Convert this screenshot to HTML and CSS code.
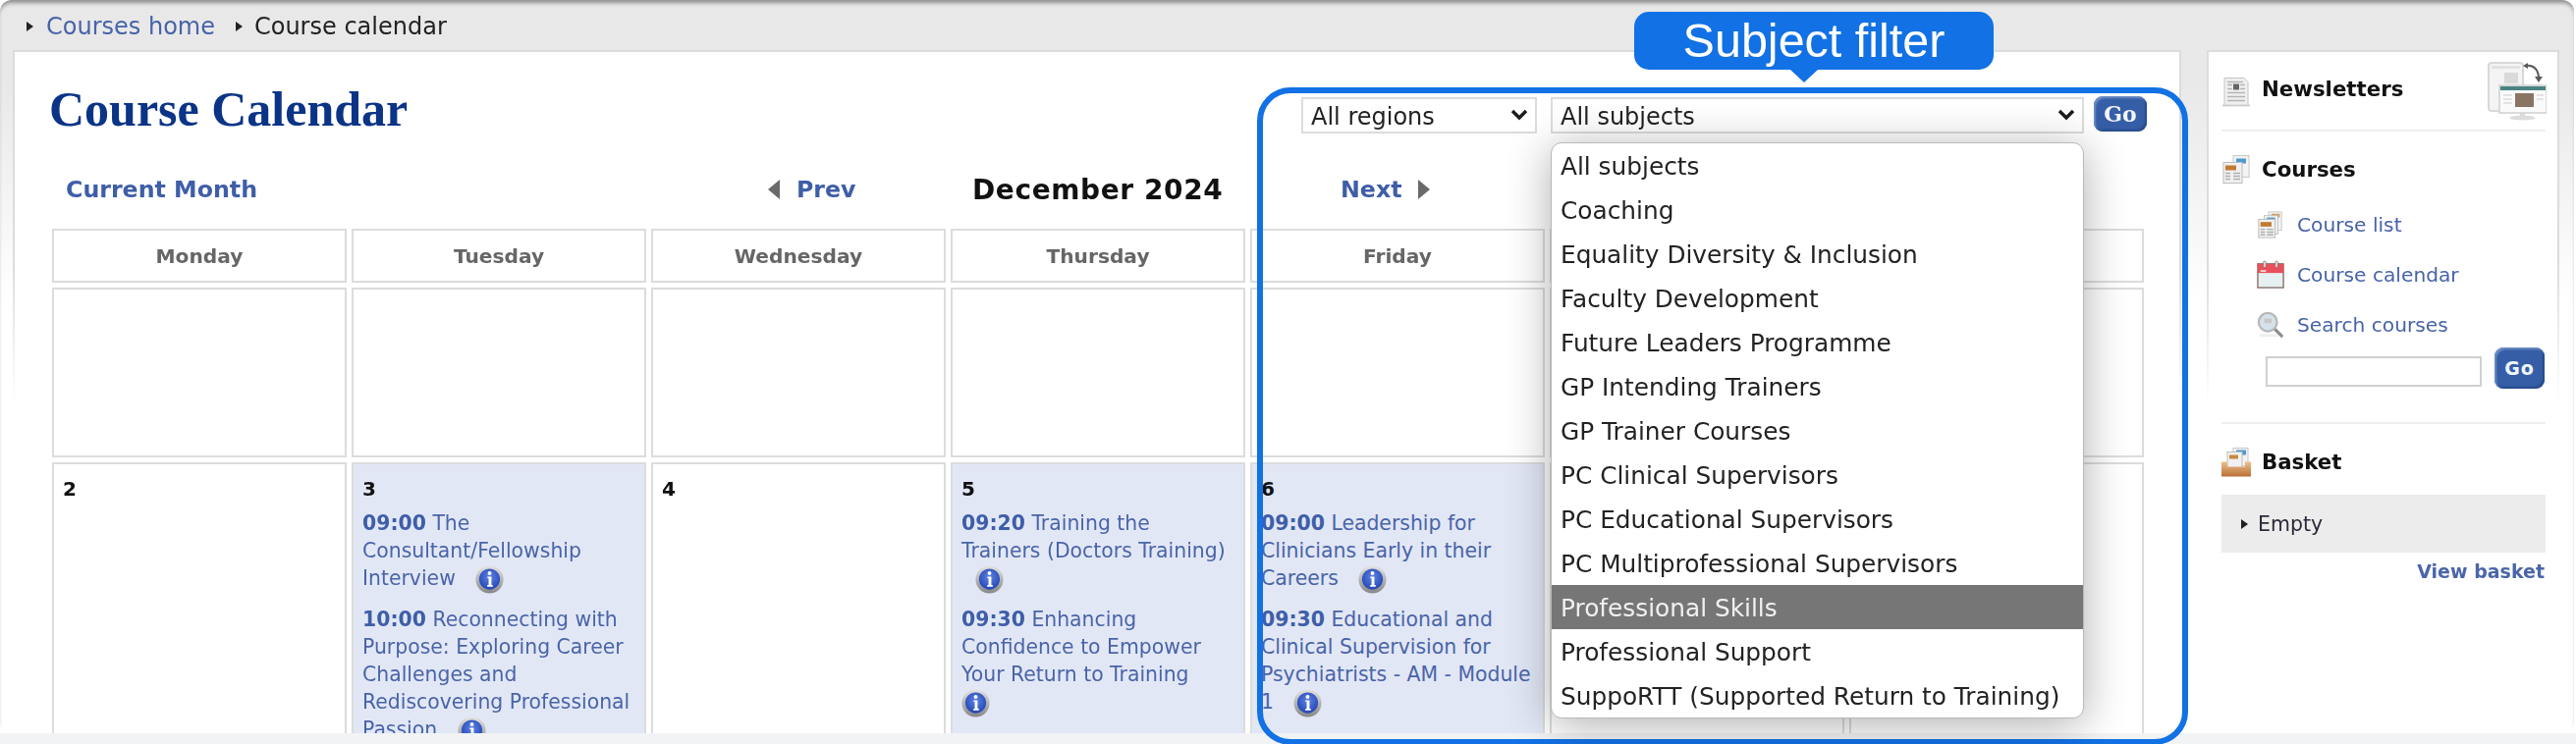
FILE: index.html
```html
<!DOCTYPE html>
<html lang="en">
<head>
<meta charset="utf-8">
<title>Course Calendar</title>
<link rel="stylesheet" href="styles.css">
</head>
<body>
<svg class="defs" width="0" height="0" aria-hidden="true">
  <defs>
    <radialGradient id="infoBlue" cx="50%" cy="40%" r="60%"><stop offset="0" stop-color="#5f84e6"/><stop offset="1" stop-color="#2447b4"/></radialGradient>
    <linearGradient id="ringGray" x1="0" y1="0" x2="0" y2="1"><stop offset="0" stop-color="#e2e2e2"/><stop offset="1" stop-color="#878787"/></linearGradient>
    <linearGradient id="trayOrange" x1="0" y1="0" x2="0" y2="1"><stop offset="0" stop-color="#eec08c"/><stop offset="1" stop-color="#b96f35"/></linearGradient>
    <symbol id="info" viewBox="0 0 30 30">
      <circle cx="15" cy="15" r="14.500" fill="url(#ringGray)"/>
      <circle cx="15" cy="14.500" r="11" fill="url(#infoBlue)"/>
      <circle cx="15" cy="8.300" r="2" fill="#fff"/>
      <path d="M12.800 11.800h4.200v9h1.400v1.600h-5.800v-1.600h1.400v-7.300h-1.200z" fill="#fff"/>
    </symbol>
    <symbol id="newspaper" viewBox="0 0 30 30">
      <path d="M3 1h20l4 4v24H3z" fill="#f0f0f0" stroke="#c4c4c4"/>
      <path d="M6 5h16M6 8h5M6 12h5M6 16h18M6 20h18M6 24h18M19 8h5M19 12h5" stroke="#b4b4b4" stroke-width="1.600"/>
      <rect x="12" y="7" width="6" height="6" fill="#666"/>
      <rect x="1" y="28" width="28" height="2" fill="#cfcfcf"/>
    </symbol>
    <symbol id="pages" viewBox="0 0 30 30">
      <rect x="12" y="1" width="16" height="22" fill="#f3f3f3" stroke="#c8c8c8"/>
      <rect x="15" y="4" width="10" height="5" fill="#4c9ad0"/>
      <rect x="2" y="8" width="19" height="21" fill="#f1f1f1" stroke="#bcbcbc"/>
      <rect x="4" y="11" width="11" height="5" fill="#c07a32"/>
      <path d="M4 19h5M4 22h5M4 25h5M12 19h7M12 22h7M12 25h7" stroke="#b0b0b0" stroke-width="1.500"/>
    </symbol>
    <symbol id="stack" viewBox="0 0 30 30">
      <rect x="13" y="1" width="14" height="20" fill="#f3f3f3" stroke="#c8c8c8"/>
      <rect x="16" y="3" width="9" height="4" fill="#d49a55"/>
      <rect x="8" y="5" width="15" height="20" fill="#f3f3f3" stroke="#c0c0c0"/>
      <rect x="11" y="7" width="9" height="4" fill="#5b9ccd"/>
      <rect x="2" y="9" width="18" height="20" fill="#f1f1f1" stroke="#b8b8b8"/>
      <rect x="4" y="12" width="12" height="5" fill="#c07a32"/>
      <path d="M4 20h5M4 23h5M4 26h5M11 20h7M11 23h7M11 26h7" stroke="#aeaeae" stroke-width="1.500"/>
    </symbol>
    <symbol id="calendar" viewBox="0 0 30 30">
      <rect x="1" y="3" width="28" height="26" fill="#e6f0f0" stroke="#86706c" stroke-width="1.500"/>
      <rect x="1" y="3" width="28" height="10" fill="#e8505c"/>
      <rect x="7" y="0" width="3" height="7" rx="1.500" fill="#d9d9d9" stroke="#8a5a5a" stroke-width=".6"/>
      <rect x="20" y="0" width="3" height="7" rx="1.500" fill="#d9d9d9" stroke="#8a5a5a" stroke-width=".6"/>
      <rect x="4" y="10" width="6" height="1.500" fill="#fff"/>
    </symbol>
    <symbol id="search" viewBox="0 0 30 30">
      <rect x="3" y="25" width="20" height="3" fill="#eee"/>
      <path d="M18 18l9 9" stroke="#8c8c8c" stroke-width="3.400" stroke-linecap="round"/>
      <circle cx="12" cy="12" r="10" fill="#d5e2ea" stroke="#b8b8b8" stroke-width="2.400"/>
      <rect x="8" y="8" width="8" height="5" fill="#c8c8c8"/>
    </symbol>
    <symbol id="tray" viewBox="0 0 30 30">
      <rect x="12" y="1" width="15" height="18" fill="#f3f3f3" stroke="#c8c8c8"/>
      <rect x="15" y="3" width="10" height="5" fill="#4c9ad0"/>
      <rect x="6" y="5" width="15" height="16" fill="#f1f1f1" stroke="#bdbdbd"/>
      <rect x="8" y="8" width="9" height="4" fill="#c9883f"/>
      <path d="M0 15h6v5h18v-5h6v15H0z" fill="url(#trayOrange)"/>
    </symbol>
  </defs>
</svg>

<div class="page">
  <div class="window">
    <nav class="crumbs">
      <i class="bullet"></i><a class="crumb-link" href="#">Courses home</a>
      <i class="bullet bullet-next"></i><span>Course calendar</span>
    </nav>

    <div class="columns">
      <main class="main">
        <div class="head">
          <h1>Course Calendar</h1>
          <form class="filters">
            <div class="select-wrap regions">
              <select><option>All regions</option></select>
              <svg class="chevron" viewBox="0 0 18 12"><path d="M2 2l7 7 7-7" fill="none" stroke="#1c1c1c" stroke-width="3.400"/></svg>
            </div>
            <div class="select-wrap subjects">
              <select><option>All subjects</option></select>
              <svg class="chevron" viewBox="0 0 18 12"><path d="M2 2l7 7 7-7" fill="none" stroke="#1c1c1c" stroke-width="3.400"/></svg>
            </div>
            <button class="go go-main" type="button">Go</button>
          </form>
        </div>

        <div class="month-nav">
          <a class="nav-link" href="#">Current Month</a>
          <a class="nav-link prev" href="#"><i class="tri tri-left"></i>Prev</a>
          <strong class="month">December 2024</strong>
          <a class="nav-link next" href="#">Next<i class="tri tri-right"></i></a>
        </div>

        <div class="calendar">
          <div class="dow">Monday</div><div class="dow">Tuesday</div><div class="dow">Wednesday</div><div class="dow">Thursday</div><div class="dow">Friday</div><div class="dow">Saturday</div><div class="dow">Sunday</div>
          <div class="day"></div><div class="day"></div><div class="day"></div><div class="day"></div><div class="day"></div><div class="day"></div><div class="day"></div>

          <div class="day"><b class="num">2</b></div>
          <div class="day has-events"><b class="num">3</b>
            <p class="event"><b>09:00</b> The Consultant/Fellowship Interview <svg class="info"><use href="#info"/></svg></p>
            <p class="event"><b>10:00</b> Reconnecting with Purpose: Exploring Career Challenges and Rediscovering Professional Passion <svg class="info"><use href="#info"/></svg></p>
          </div>
          <div class="day"><b class="num">4</b></div>
          <div class="day has-events"><b class="num">5</b>
            <p class="event"><b>09:20</b> Training the Trainers (Doctors Training) <svg class="info"><use href="#info"/></svg></p>
            <p class="event"><b>09:30</b> Enhancing Confidence to Empower Your Return to Training<br><svg class="info flush"><use href="#info"/></svg></p>
          </div>
          <div class="day has-events"><b class="num">6</b>
            <p class="event"><b>09:00</b> Leadership for Clinicians Early in their Careers <svg class="info"><use href="#info"/></svg></p>
            <p class="event"><b>09:30</b> Educational and Clinical Supervision for Psychiatrists - AM - Module 1 <svg class="info"><use href="#info"/></svg></p>
          </div>
          <div class="day"></div>
          <div class="day"></div>
        </div>
      </main>

      <aside class="side">
        <section class="side-section news">
          <svg class="side-icon"><use href="#newspaper"/></svg>
          <h2>Newsletters</h2>
          <svg class="devices" viewBox="0 0 60 60">
            <rect x="1" y="1" width="35" height="49" rx="3" fill="#f4f4f4" stroke="#d8d8d8" stroke-width="2"/>
            <rect x="4" y="4" width="29" height="3" fill="#e2e2e2"/>
            <rect x="17" y="11" width="14" height="11" fill="#dadada"/>
            <path d="M39 4c8-1 13 4 13 13" fill="none" stroke="#5a5a5a" stroke-width="2"/>
            <path d="M36 4l5-3v6zM48 15h8l-4 6z" fill="#5a5a5a"/>
            <rect x="12" y="24" width="48" height="28" fill="#fafafa" stroke="#d2d2d2" stroke-width="1.600"/>
            <rect x="13" y="25" width="46" height="4" fill="#4a8482"/>
            <rect x="28" y="32" width="19" height="14" fill="#8a7463"/>
            <path d="M16 34h9M16 38h9M16 42h9M50 34h7M50 38h7" stroke="#dcdcdc" stroke-width="1.600"/>
            <path d="M33 52h5v4h-5z" fill="#d8d8d8"/>
            <ellipse cx="35.500" cy="57" rx="13" ry="2.500" fill="#dcdcdc"/>
          </svg>
        </section>

        <section class="side-section courses">
          <div class="side-head"><svg class="side-icon"><use href="#pages"/></svg><h2>Courses</h2></div>
          <ul class="side-links">
            <li><svg class="link-icon"><use href="#stack"/></svg><a href="#">Course list</a></li>
            <li><svg class="link-icon"><use href="#calendar"/></svg><a href="#">Course calendar</a></li>
            <li><svg class="link-icon"><use href="#search"/></svg><a href="#">Search courses</a></li>
          </ul>
          <form class="search">
            <input type="text" aria-label="Search courses">
            <button class="go go-side" type="button">Go</button>
          </form>
        </section>

        <section class="basket">
          <div class="side-head"><svg class="side-icon"><use href="#tray"/></svg><h2>Basket</h2></div>
          <div class="basket-box"><i class="bullet"></i><span>Empty</span></div>
          <a class="view-basket" href="#">View basket</a>
        </section>
      </aside>
    </div>
  </div>

  <div class="frame"></div>
  <div class="callout">Subject filter</div>

  <ul class="dropdown">
    <li>All subjects</li>
    <li>Coaching</li>
    <li>Equality Diversity &amp; Inclusion</li>
    <li>Faculty Development</li>
    <li>Future Leaders Programme</li>
    <li>GP Intending Trainers</li>
    <li>GP Trainer Courses</li>
    <li>PC Clinical Supervisors</li>
    <li>PC Educational Supervisors</li>
    <li>PC Multiprofessional Supervisors</li>
    <li class="active">Professional Skills</li>
    <li>Professional Support</li>
    <li>SuppoRTT (Supported Return to Training)</li>
  </ul>
</div>
</body>
</html>
```

FILE: styles.css
```css
* { box-sizing: border-box; }
html, body { margin: 0; height: 758px; overflow: hidden; }
body { background: #f1f3f5; font-family: "DejaVu Sans", Verdana, sans-serif; color: #222; }
a { color: #4763a8; text-decoration: none; }
.defs { position: absolute; }

.page { position: relative; width: 2623px; height: 758px; overflow: hidden; background: linear-gradient(#ffffff 747px, #f1f3f5 747px); }
.window {
  width: 2621px;
  height: 747px;
  overflow: hidden;
  border-radius: 12px 12px 10px 10px;
  background: linear-gradient(#e8e8e8 0, #e9e9e9 90px, #ffffff 310px);
  box-shadow: inset 0 5px 4px -2px #8e8e8e;
  filter: blur(.45px);
}

.crumbs { display: flex; align-items: center; height: 51px; padding: 3px 0 0 27px; font-size: 24px; }
.bullet { display: inline-block; width: 0; height: 0; border-left: 7px solid #222; border-top: 5px solid transparent; border-bottom: 5px solid transparent; }
.crumb-link { margin-left: 13px; }
.bullet-next { margin-left: 21px; margin-right: 12px; }

.columns { display: flex; align-items: stretch; height: 696px; padding-left: 13px; }
.main, .side {
  border: 2px solid;
  border-bottom: 0;
  border-image: linear-gradient(#dcdcdc, #dcdcdc 220px, #ffffff 360px) 2;
  background: #fff;
}
.main { width: 2208px; }
.side { width: 359px; margin-left: 26px; padding: 0 12px 0 13px; }

.head { display: flex; justify-content: space-between; align-items: flex-start; height: 120px; padding: 30px 33px 0 35px; }
h1 { margin: 0; font: 700 50px/56px "Liberation Serif", "Times New Roman", serif; color: #0b3487; }
.filters { display: flex; margin-top: 16px; }
.select-wrap { position: relative; height: 37px; }
.regions { width: 240px; }
.subjects { width: 543px; margin-left: 14px; }
select {
  appearance: none;
  width: 100%;
  height: 100%;
  padding: 3px 8px 0;
  border: 2px solid #dcdcdc;
  border-radius: 0;
  background: #fff;
  color: #222;
  font: 400 24px "DejaVu Sans", Verdana, sans-serif;
}
.chevron { position: absolute; right: 9px; top: 12px; width: 18px; height: 12px; }
.go {
  border: 0;
  border-radius: 9px;
  background: #355ea6;
  box-shadow: inset 2px 2px 2px #6f8fc6, inset -2px -2px 2px #284b8c;
  color: #f2f5fb;
  font-weight: 700;
  font-family: "DejaVu Sans", Verdana, sans-serif;
}
.go-main { width: 54px; height: 36px; margin: -1px 0 0 10px; font: 700 22px "DejaVu Serif", serif; }
.go-side { width: 51px; height: 42px; margin-left: 13px; font-size: 19px; letter-spacing: 1px; }

.month-nav { display: grid; grid-template-columns: 716px 207px 375px auto; align-items: center; height: 40px; margin-bottom: 20px; padding-left: 52px; font-size: 23.700px; }
.nav-link { font-weight: 700; color: #3f5ea8; }
.month { font-size: 28px; color: #111; letter-spacing: .6px; }
.prev, .next { display: flex; align-items: center; }
.tri { width: 0; height: 0; border-top: 10px solid transparent; border-bottom: 10px solid transparent; }
.tri-left { border-right: 12px solid #6a6a6a; margin-right: 17px; margin-left: -1px; }
.tri-right { border-left: 12px solid #6a6a6a; margin-left: 16px; }

.calendar { display: grid; grid-template-columns: repeat(7, 300px); grid-template-rows: 55px 173px 400px; gap: 5px; margin-left: 38px; }
.dow, .day { border: 2px solid #dcdcdc; }
.dow { display: flex; align-items: center; justify-content: center; color: #666; font-size: 20.200px; font-weight: 700; }
.day { padding: 13px 9px 0; }
.has-events { background: #e1e7f5; }
.num { display: block; height: 24px; font-size: 20px; line-height: 24px; color: #111; }
.event { margin: 9px 0 14px; color: #4a64a8; font-size: 20.400px; line-height: 28px; }
.event b { color: #3f5ea8; }
.info { width: 29px; height: 29px; margin: -4px 0 -4px 14px; vertical-align: middle; }
.info.flush { margin-left: 0; }

.side-section { border-bottom: 2px solid #eeeeee; }
h2 { margin: 0; font-size: 21.300px; line-height: 30px; color: #111; }
.news { display: flex; align-items: center; height: 81px; padding: 10px 0 9px; }
.news h2 { margin: -4px 0 0 11px; }
.side-icon { flex: none; width: 30px; height: 31px; }
.devices { width: 60px; height: 60px; margin-left: auto; margin-right: -1px; }
.side-head { display: flex; align-items: center; gap: 11px; }
.courses { height: 298px; padding-top: 23px; }
.side-links { list-style: none; display: flex; flex-direction: column; gap: 21px; margin: 26px 0 0; padding: 0 0 0 36px; }
.side-links li { display: flex; align-items: center; gap: 13px; height: 30px; font-size: 20.200px; }
.link-icon { width: 28px; height: 30px; }
.search { display: flex; align-items: flex-end; margin-top: 8px; padding-left: 45px; }
.search input { width: 220px; height: 31px; margin-bottom: 2px; border: 2px solid #d0d0d0; background: #fff; }
.basket { padding-top: 23px; }
.basket-box { display: flex; align-items: center; height: 59px; margin-top: 18px; padding-left: 20px; background: #ececec; font-size: 20.500px; color: #2b2b3a; }
.basket-box .bullet { margin-right: 10px; }
.view-basket { display: block; margin: 8px 1px 0 0; text-align: right; font-size: 19px; font-weight: 700; line-height: 22px; color: #4a66aa; }

.frame { position: absolute; left: 1280px; top: 89px; width: 948px; height: 670px; border: 6px solid #1271e4; border-radius: 34px; }
.callout {
  position: absolute;
  left: 1664px;
  top: 12px;
  width: 366px;
  height: 59px;
  border-radius: 15px;
  background: #1271e4;
  color: #fff;
  font: 400 48.500px/58px "Liberation Sans", Arial, sans-serif;
  text-align: center;
}
.callout::after {
  content: "";
  position: absolute;
  left: 159px;
  top: 59px;
  border-top: 13px solid #1271e4;
  border-left: 14px solid transparent;
  border-right: 14px solid transparent;
}
.dropdown {
  position: absolute;
  left: 1579px;
  top: 145px;
  width: 543px;
  margin: 0;
  padding: 0;
  list-style: none;
  overflow: hidden;
  border: 1px solid #b8b8b8;
  border-radius: 11px;
  background: #fff;
  box-shadow: 0 6px 45px rgba(0, 0, 0, .32);
  font-size: 24.800px;
  color: #222;
  filter: blur(.4px);
}
.dropdown li { height: 45px; padding: 0 9px; line-height: 47px; white-space: nowrap; }
.dropdown .active { background: #767676; color: #f0f0f0; }
```
